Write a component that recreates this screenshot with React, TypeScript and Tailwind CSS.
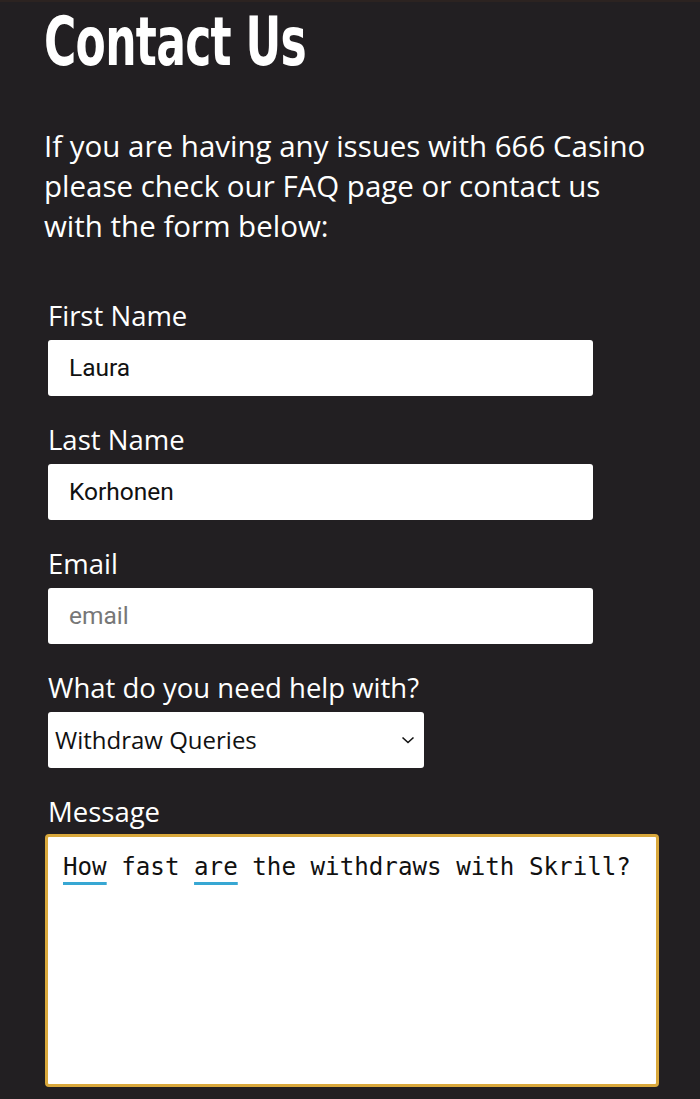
import React from "react";

const labelCls =
  "block pt-[2px] text-[27.5px] leading-[32px] text-white font-['Open_Sans',sans-serif]";
const inputCls =
  "flex h-[56px] items-center rounded-[3px] bg-white px-[21px] text-[24.5px] font-['Roboto',sans-serif]";

function Field({ label, children }: { label: string; children: React.ReactNode }) {
  return (
    <div className="mb-[26px]">
      <div className={labelCls}>{label}</div>
      <div className="mt-[8px]">{children}</div>
    </div>
  );
}

export default function App() {
  return (
    <div className="min-h-[1099px] overflow-hidden border-t-2 border-[#2c2321] bg-[#221f22] px-[44px]">
      <h1 className="mt-[2px] inline-block origin-left scale-x-[0.72] font-['Liberation_Sans_Narrow','DejaVu_Sans_Condensed',sans-serif] text-[68px] font-bold leading-[76px] tracking-[-1px] text-white">
        Contact Us
      </h1>

      <p className="mt-[46px] font-['Open_Sans',sans-serif] text-[29.5px] leading-[40px] text-white">
        If you are having any issues with 666 Casino please check our FAQ page or contact us
        with the form below:
      </p>

      <form className="mt-[52px] pl-[4px]">
        <Field label="First Name">
          <div className={`${inputCls} w-[545px] text-[#111]`}>Laura</div>
        </Field>
        <Field label="Last Name">
          <div className={`${inputCls} w-[545px] text-[#111]`}>Korhonen</div>
        </Field>
        <Field label="Email">
          <div className={`${inputCls} w-[545px] text-[#777]`}>email</div>
        </Field>
        <Field label="What do you need help with?">
          <div className="flex h-[56px] w-[376px] items-center justify-between rounded-[3px] bg-white pl-[7px] pr-[8px] font-['Open_Sans',sans-serif] text-[24px] text-[#111]">
            <span>Withdraw Queries</span>
            <svg width="16" height="16" viewBox="0 0 16 16" fill="none" stroke="#111" strokeWidth="1.6">
              <path d="M2.5 5.5 L8 10.5 L13.5 5.5" />
            </svg>
          </div>
        </Field>
        <div>
          <div className={labelCls}>Message</div>
          <div className="-ml-[3px] mt-[6px] h-[253px] w-[614px] rounded-[4px] border-[3px] border-[#d9a83c] bg-white px-[15px] pt-[14px] font-['DejaVu_Sans_Mono',monospace] text-[24.2px] leading-[32px] text-[#111]">
            <span className="underline decoration-[#37a7d3] decoration-[3px] underline-offset-[7px]">How</span> fast{" "}
            <span className="underline decoration-[#37a7d3] decoration-[3px] underline-offset-[7px]">are</span> the
            withdraws with Skrill?
          </div>
        </div>
      </form>
    </div>
  );
}
